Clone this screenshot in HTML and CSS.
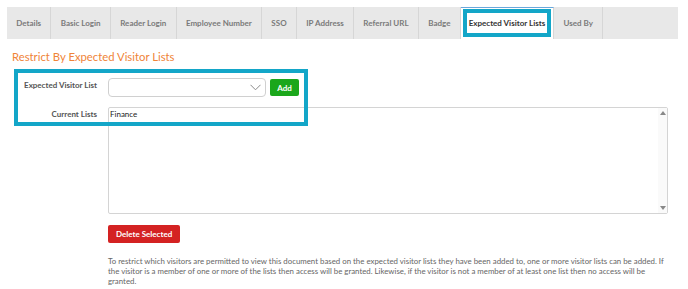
FILE: index.html
```html
<!DOCTYPE html>
<html lang="en">
<head>
    <meta charset="UTF-8">
    <title>Restrict By Expected Visitor Lists</title>
    <link rel="stylesheet" href="styles.css">
</head>
<body>

<div class="tabs">
    <div class="tab">Details</div>
    <div class="tab">Basic Login</div>
    <div class="tab">Reader Login</div>
    <div class="tab">Employee Number</div>
    <div class="tab">SSO</div>
    <div class="tab">IP Address</div>
    <div class="tab">Referral URL</div>
    <div class="tab">Badge</div>
    <div class="tab active"><span class="mark">Expected Visitor Lists</span></div>
    <div class="tab">Used By</div>
</div>

<div class="panel">
    <h2>Restrict By Expected Visitor Lists</h2>

    <div class="form-area">
        <!-- highlight box drawn over the first two rows -->
        <div class="callout"></div>

        <div class="row first">
            <label for="visitorList">Expected Visitor List</label>
            <div class="field-line">
                <div class="select" id="visitorList">
                    <svg class="chevron" width="11" height="7" viewBox="0 0 11 7">
                        <path d="M0.5 0.8 L5.5 5.8 L10.5 0.8" fill="none" stroke="#8a8a8a" stroke-width="1"/>
                    </svg>
                </div>
                <button class="add-btn">Add</button>
            </div>
        </div>

        <div class="row">
            <label>Current Lists</label>
            <div class="list-box">
                <div class="list-items">
                    <div>Finance</div>
                </div>
                <div class="scroll">
                    <span class="arrow up"></span>
                    <span class="arrow down"></span>
                </div>
            </div>
        </div>

        <div class="row">
            <span></span>
            <div>
                <button class="delete-btn">Delete Selected</button>
                <p class="help">To restrict which visitors are permitted to view this document based on the expected visitor lists they have been added to, one or more visitor lists can be added. If the&nbsp;visitor is a member of one or more of the lists then access will be granted. Likewise, if the visitor is not a member of at least one list then no access will be granted.</p>
            </div>
        </div>
    </div>
</div>

</body>
</html>
```

FILE: styles.css
```css
body {
    margin: 0;
    padding: 7px 10px 0 7px;
    font-family: Lato, "Open Sans", sans-serif;
    background: #ffffff;
    color: #555;
}
.tabs {
    display: flex;
    height: 32px;
    width: 671px;
    background: #e8e8e8;
}
.tab {
    display: flex;
    align-items: center;
    padding: 0 9.3px;
    font-size: 8px;
    font-weight: bold;
    color: #7a7a7a;
    border-right: 1px solid #d6d6d6;
}
.tab.active {
    background: #ffffff;
    border-top: 1px solid #6aa8dc;
    padding: 1px 2px 2px;
    align-items: stretch;
}
.mark {
    display: flex;
    align-items: center;
    padding: 0 2px;
    border: 4px solid #13a6c8;
    color: #333;
}
.panel {
    width: 661px;
}
h2 {
    margin: 11px 0 0 5px;
    font-size: 11.3px;
    line-height: 14px;
    font-weight: normal;
    color: #f08438;
}
.form-area {
    position: relative;
    margin-top: 5px;
}
.callout {
    position: absolute;
    left: 7px;
    top: 0;
    width: 286px;
    height: 49px;
    border: 4px solid #13a6c8;
}
.row {
    display: grid;
    grid-template-columns: 90px 1fr;
    column-gap: 11px;
}
.row.first {
    padding-top: 9px;
    margin-bottom: 10px;
}
label {
    text-align: right;
    font-size: 8px;
    font-weight: bold;
    color: #555;
    padding-top: 2px;
}
.field-line {
    display: flex;
    align-items: center;
    gap: 4px;
}
.select {
    width: 158px;
    height: 19px;
    border: 1px solid #d0d0d0;
    border-radius: 4px;
    display: flex;
    align-items: center;
    justify-content: flex-end;
    padding-right: 4px;
    box-sizing: border-box;
}
.add-btn, .delete-btn {
    border: none;
    border-radius: 2px;
    color: #ffffff;
    font-family: Lato, sans-serif;
    font-size: 8px;
    font-weight: bold;
}
.add-btn {
    background: #1ba71b;
    height: 17px;
    width: 29px;
    padding: 0;
}
.list-box {
    display: flex;
    height: 107px;
    border: 1px solid #d4d4d4;
    border-radius: 2px;
    box-sizing: border-box;
}
.list-items {
    flex: 1;
    padding: 1px 1px;
    font-size: 8px;
    color: #222;
}
.scroll {
    width: 9px;
    background: #fafafa;
    display: flex;
    flex-direction: column;
    justify-content: space-between;
    align-items: center;
    padding: 3px 0;
}
.arrow {
    width: 0;
    height: 0;
    border-left: 3px solid transparent;
    border-right: 3px solid transparent;
}
.arrow.up { border-bottom: 4px solid #888; }
.arrow.down { border-top: 4px solid #888; }
.delete-btn {
    background: #d42222;
    height: 18px;
    padding: 0 8px;
    margin-top: 11px;
}
.help {
    margin: 13px 0 0;
    font-size: 7.85px;
    line-height: 10px;
    color: #666;
}
```
